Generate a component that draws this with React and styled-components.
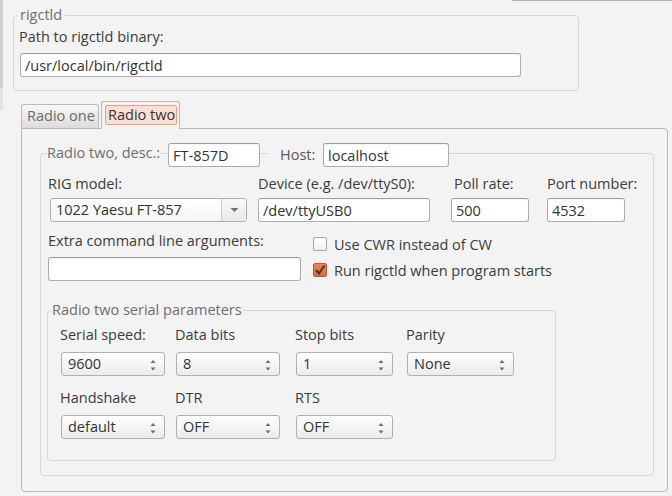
import React from 'react';
import styled, { createGlobalStyle } from 'styled-components';

const Global = createGlobalStyle`
  html, body { margin: 0; padding: 0; background: #f3f3f3; }
  body {
    font-family: "Open Sans", "Noto Sans", sans-serif;
    font-size: 14.5px;
    color: #3c3c3c;
    width: 672px;
    height: 496px;
    overflow: hidden;
  }
  * { box-sizing: border-box; }
`;

const Window = styled.div`
  width: 672px;
  height: 496px;
  padding: 5px 0 0 13px;
  display: flex;
  flex-direction: column;
  background:
    linear-gradient(#d0d0d0, #d0d0d0) 0 0 / 3px 88px no-repeat,
    linear-gradient(#e2e2e2, #e2e2e2) 0 88px / 3px 22px no-repeat,
    linear-gradient(#b3afab, #b3afab) 512px 0 / 160px 1px no-repeat,
    #f3f3f3;
`;

const GroupBox = styled.fieldset`
  margin: 0 0 0 ${p => p.$ml || 0}px;
  min-width: 0;
  width: ${p => p.$w}px;
  border: 1px solid #d6d6d6;
  border-radius: 4px;
  padding: ${p => p.$pad};
`;

const Legend = styled.legend`
  margin-left: ${p => p.$ml}px;
  padding: ${p => p.$pad};
  line-height: 20px;
  color: #6e6e6e;
  white-space: nowrap;
`;

const HeaderLegend = styled.legend`
  margin-left: -1px;
  padding: 4px 0 0 0;
  display: flex;
  align-items: flex-start;
  height: 28px;
`;

const LegendTitle = styled.span`
  width: ${p => p.$w}px;
  line-height: 20px;
  color: #6e6e6e;
  white-space: nowrap;
`;

const HeaderLabel = styled.span`
  width: ${p => p.$w}px;
  padding-left: 12px;
  line-height: 24px;
  color: #585858;
  white-space: nowrap;
`;

const Seg = styled.span`
  width: ${p => p.$w}px;
  height: 1px;
  margin-top: 10px;
  background: #d6d6d6;
`;

const Label = styled.div`
  line-height: 20px;
  height: 20px;
  padding-left: ${p => p.$pl || 0}px;
  white-space: nowrap;
  color: #3c3c3c;
`;

const Input = styled.input`
  display: block;
  width: ${p => p.$w}px;
  height: 24px;
  margin: 0 0 0 ${p => p.$ml || 0}px;
  padding: 0 4px;
  font: inherit;
  color: #333;
  background: #fff;
  border: 1px solid #adadad;
  border-top-color: #9e9e9e;
  border-radius: 3px;
  box-shadow: inset 0 1px 1px rgba(0, 0, 0, 0.04);
  outline: none;
`;

const Combo = styled.div`
  display: flex;
  width: ${p => p.$w}px;
  height: 24px;
  margin-left: ${p => p.$ml || 0}px;
  border: 1px solid #adadad;
  border-radius: 3px;
  background: linear-gradient(#ffffff, #f4f4f4);
  overflow: hidden;
`;

const ComboText = styled.span`
  flex: 1;
  padding-left: 5px;
  line-height: 22px;
  color: #333;
  white-space: nowrap;
`;

const ComboButton = styled.span`
  width: 25px;
  display: flex;
  align-items: center;
  justify-content: center;
  border-left: 1px solid #cdcdcd;
  background: linear-gradient(#f9f9f9, #e9e9e9);
`;

const Spin = styled.div`
  display: flex;
  align-items: center;
  width: ${p => p.$w}px;
  height: 24px;
  margin-left: 1px;
  border: 1px solid #b0b0b0;
  border-radius: 3px;
  background: linear-gradient(#ffffff, #ebebeb);
`;

const SpinText = styled.span`
  flex: 1;
  padding-left: 6px;
  line-height: 22px;
  color: #333;
  white-space: nowrap;
`;

const SpinArrows = styled.span`
  width: 22px;
  display: flex;
  justify-content: center;
  padding-top: 2px;
`;

const TabWidget = styled.div`
  margin: 10px 0 0 8px;
  width: 647px;
  display: flex;
  flex-direction: column;
`;

const TabBar = styled.div`
  display: flex;
  align-items: flex-end;
  gap: 2px;
  height: 27px;
`;

const Tab = styled.div`
  width: 78px;
  height: 24px;
  padding-left: 5px;
  border: 1px solid #b9b9b9;
  border-bottom: none;
  border-radius: 3px 3px 0 0;
  background: linear-gradient(#f7f7f7, #dcdcdc);
  color: #6c6c6c;
  line-height: 22px;
  white-space: nowrap;
`;

const ActiveTab = styled.div`
  position: relative;
  z-index: 1;
  width: 79px;
  height: 28px;
  margin-bottom: -1px;
  padding: 3px 2px 0 3px;
  border: 1px solid #b9b9b9;
  border-bottom: none;
  border-radius: 3px 3px 0 0;
  background: #f3f3f3;
`;

const FocusRect = styled.div`
  height: 20px;
  padding-left: 2px;
  border: 1px solid #ee9d80;
  border-radius: 2px;
  background: #fbdfd4;
  color: #333;
  line-height: 18px;
  white-space: nowrap;
`;

const Pane = styled.div`
  border: 1px solid #b9b9b9;
  border-radius: 0 4px 4px 4px;
  padding: 10px 13px 15px 18px;
`;

const Row = styled.div`
  display: flex;
  align-items: flex-start;
  margin-top: ${p => p.$mt || 0}px;
`;

const Field = styled.div`
  display: flex;
  flex-direction: column;
  gap: ${p => p.$gap ?? 4}px;
  width: ${p => (p.$w ? `${p.$w}px` : 'auto')};
  margin-left: ${p => p.$ml || 0}px;
`;

const CheckColumn = styled.div`
  display: flex;
  flex-direction: column;
  gap: 2px;
  padding-top: 1px;
  margin-left: 12px;
`;

const CheckRow = styled.label`
  display: flex;
  align-items: center;
  gap: 7px;
  height: 24px;
  white-space: nowrap;
  color: #3c3c3c;
`;

const Box = styled.span`
  width: 14px;
  height: 14px;
  border-radius: 2px;
  border: 1px solid ${p => (p.$on ? '#c4542c' : '#a5a5a5')};
  background: ${p => (p.$on ? 'linear-gradient(#ee8058, #e06a3f)' : 'linear-gradient(#ffffff, #efefef)')};
  display: flex;
  align-items: center;
  justify-content: center;
`;

const SerialGrid = styled.div`
  display: grid;
  grid-template-columns: 115px 120px 111px 120px;
  row-gap: 12px;
`;

const DownArrow = () => (
  <svg width="9" height="6" viewBox="0 0 9 6">
    <path d="M0.5 1 L8.5 1 L4.5 5 Z" fill="#707070" />
  </svg>
);

const UpDown = () => (
  <svg width="8" height="14" viewBox="0 0 8 14">
    <path d="M1.5 5 L4 2 L6.5 5 Z" fill="#6c6c6c" />
    <path d="M1.5 9.5 L6.5 9.5 L4 12.5 Z" fill="#6c6c6c" />
  </svg>
);

const Check = ({ on, children }) => (
  <CheckRow>
    <Box $on={on}>
      {on && (
        <svg width="12" height="12" viewBox="0 0 12 12">
          <path d="M2 6 L5 9.5 L10.5 1.5" fill="none" stroke="#3e3a38" strokeWidth="2" />
        </svg>
      )}
    </Box>
    {children}
  </CheckRow>
);

const SpinBox = ({ w, value }) => (
  <Spin $w={w}>
    <SpinText>{value}</SpinText>
    <SpinArrows>
      <UpDown />
    </SpinArrows>
  </Spin>
);

const serial = [
  { label: 'Serial speed:', value: '9600', w: 104 },
  { label: 'Data bits', value: '8', w: 104 },
  { label: 'Stop bits', value: '1', w: 97 },
  { label: 'Parity', value: 'None', w: 107 },
  { label: 'Handshake', value: 'default', w: 104 },
  { label: 'DTR', value: 'OFF', w: 104 },
  { label: 'RTS', value: 'OFF', w: 97 },
];

export default function App() {
  return (
    <>
      <Global />
      <Window>
        <GroupBox $w={566} $pad="2px 5px 13px 5px">
          <Legend $ml={-2} $pad="0 3px">rigctld</Legend>
          <Field $gap={6}>
            <Label>Path to rigctld binary:</Label>
            <Input $w={501} $ml={1} value="/usr/local/bin/rigctld" readOnly />
          </Field>
        </GroupBox>

        <TabWidget>
          <TabBar>
            <Tab>Radio one</Tab>
            <ActiveTab>
              <FocusRect>Radio two</FocusRect>
            </ActiveTab>
          </TabBar>
          <Pane>
            <GroupBox $w={614} $pad="7px 6px 14px 7px">
              <HeaderLegend>
                <LegendTitle $w={114}>Radio two, desc.:</LegendTitle>
                <Seg $w={7} />
                <Input $w={92} value="FT-857D" readOnly />
                <Seg $w={8} />
                <HeaderLabel $w={55}>Host:</HeaderLabel>
                <Input $w={126} value="localhost" readOnly />
              </HeaderLegend>

              <Row>
                <Field $w={199}>
                  <Label>RIG model:</Label>
                  <Combo $w={197} $ml={2}>
                    <ComboText>1022 Yaesu FT-857</ComboText>
                    <ComboButton>
                      <DownArrow />
                    </ComboButton>
                  </Combo>
                </Field>
                <Field $w={172} $ml={11}>
                  <Label>Device (e.g. /dev/ttyS0):</Label>
                  <Input $w={172} value="/dev/ttyUSB0" readOnly />
                </Field>
                <Field $w={78} $ml={21}>
                  <Label $pl={3}>Poll rate:</Label>
                  <Input $w={78} value="500" readOnly />
                </Field>
                <Field $w={78} $ml={18}>
                  <Label>Port number:</Label>
                  <Input $w={78} value="4532" readOnly />
                </Field>
              </Row>

              <Row $mt={9}>
                <Field $w={253} $gap={6}>
                  <Label>Extra command line arguments:</Label>
                  <Input $w={253} value="" readOnly />
                </Field>
                <CheckColumn>
                  <Check on={false}>Use CWR instead of CW</Check>
                  <Check on>Run rigctld when program starts</Check>
                </CheckColumn>
              </Row>

              <Row $mt={18}>
                <GroupBox $w={509} $ml={-1} $pad="5px 10px 21px 12px">
                  <Legend $ml={-9} $pad="0 1px">Radio two serial parameters</Legend>
                  <SerialGrid>
                    {serial.map(s => (
                      <Field key={s.label} $gap={7}>
                        <Label>{s.label}</Label>
                        <SpinBox w={s.w} value={s.value} />
                      </Field>
                    ))}
                  </SerialGrid>
                </GroupBox>
              </Row>
            </GroupBox>
          </Pane>
        </TabWidget>
      </Window>
    </>
  );
}
